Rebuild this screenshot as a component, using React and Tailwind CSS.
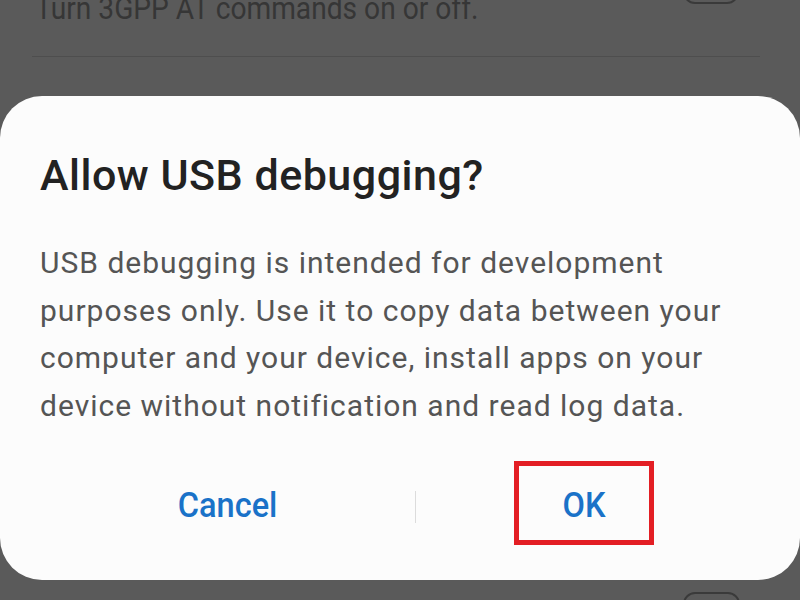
export default function App() {
  return (
    <div className="w-[800px] h-[600px] bg-[#5a5a5a] overflow-hidden relative" style={{ fontFamily: 'Roboto, "Noto Sans", sans-serif' }}>
      {/* background settings list */}
      <div className="h-[96px] relative flex flex-col">
        <div className="pl-[40px] text-[32px] leading-[32px] text-[#363636] -mt-[8px] whitespace-nowrap" style={{ transform: 'scaleX(0.88)', transformOrigin: 'left' }}>
          Turn 3GPP AT commands on or off.
        </div>
        <div className="absolute left-[683px] -top-[20px] w-[56px] h-[24px] rounded-full border-[2px] border-[#3a3a3a]" />
        <div className="absolute left-[32px] top-[56px] w-[728px] h-[1px] bg-[#4e4e4e]" />
      </div>
      {/* dialog */}
      <div className="w-[800px] h-[484px] bg-[#fcfcfc] rounded-[42px] flex flex-col">
        <div className="pl-[40px] pt-[53px] text-[43px] leading-[52px] text-[#222222] font-medium tracking-[0.5px]">
          Allow USB debugging?
        </div>
        <div className="pl-[40px] w-[770px] pt-[38px] text-[30px] leading-[47.5px] text-[#555555] tracking-[1px]">
          USB debugging is intended for development purposes only. Use it to copy data between your computer and your device, install apps on your device without notification and read log data.
        </div>
        <div className="flex items-center mt-[32px] h-[84px]">
          <div className="w-[415px] flex justify-center pl-[41px]">
            <span className="text-[35px] font-medium text-[#1a72c8]" style={{ transform: 'translateY(3px) scaleX(0.93)' }}>Cancel</span>
          </div>
          <div className="w-[1px] h-[32px] bg-[#dcdcdc] translate-y-[4px]" />
          <div className="flex-1 flex pl-[98px]">
            <div className="w-[140px] h-[84px] border-[5px] border-[#e31e24] flex items-center justify-center">
              <span className="text-[35px] font-medium text-[#1a72c8]" style={{ transform: 'translateY(3px) scaleX(0.93)' }}>OK</span>
            </div>
          </div>
        </div>
      </div>
      <div className="absolute left-[683px] top-[592px] w-[57px] h-[24px] rounded-full border-[2px] border-[#3a3a3a]" />
    </div>
  );
}
